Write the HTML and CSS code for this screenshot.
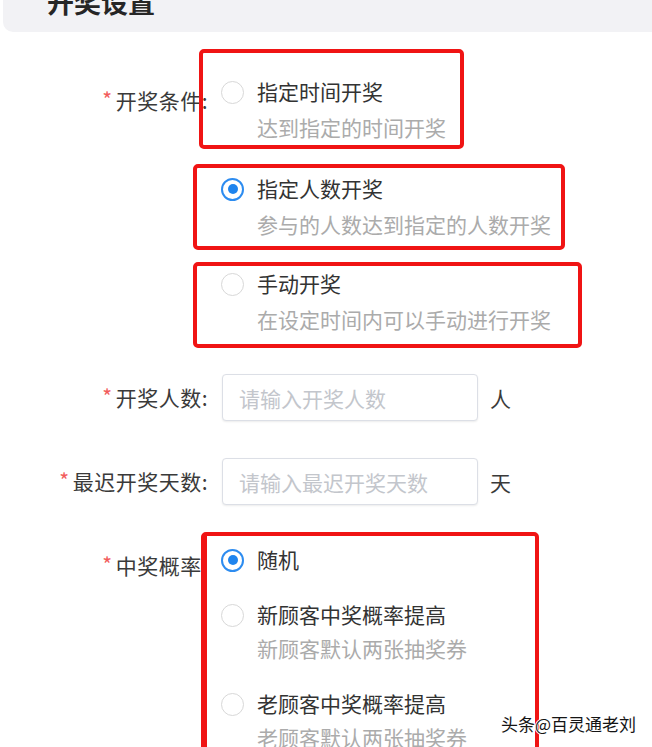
FILE: index.html
```html
<!DOCTYPE html>
<html lang="zh-CN">
<head>
<meta charset="utf-8">
<title>开奖设置</title>
<link rel="stylesheet" href="styles.css">
</head>
<body>
<div class="page">
  <div class="section-head"><h2 class="section-title">开奖设置</h2></div>

  <form class="form">
    <div class="row row-cond">
      <div class="label"><span class="req">*</span>开奖条件:</div>
      <div class="field stack">
        <div class="mark mark-1">
          <label class="opt">
            <span class="radio"></span>
            <span class="opt-title">指定时间开奖</span>
            <span class="opt-desc">达到指定的时间开奖</span>
          </label>
        </div>
        <div class="mark mark-2">
          <label class="opt">
            <span class="radio checked"></span>
            <span class="opt-title">指定人数开奖</span>
            <span class="opt-desc">参与的人数达到指定的人数开奖</span>
          </label>
        </div>
        <div class="mark mark-3">
          <label class="opt">
            <span class="radio"></span>
            <span class="opt-title">手动开奖</span>
            <span class="opt-desc">在设定时间内可以手动进行开奖</span>
          </label>
        </div>
      </div>
    </div>

    <div class="row row-input row-num">
      <div class="label"><span class="req">*</span>开奖人数:</div>
      <div class="field inline">
        <input class="input" type="text" placeholder="请输入开奖人数">
        <span class="unit">人</span>
      </div>
    </div>

    <div class="row row-input row-days">
      <div class="label"><span class="req">*</span>最迟开奖天数:</div>
      <div class="field inline">
        <input class="input" type="text" placeholder="请输入最迟开奖天数">
        <span class="unit">天</span>
      </div>
    </div>

    <div class="row row-prob">
      <div class="label"><span class="req">*</span>中奖概率:</div>
      <div class="field">
        <div class="mark mark-4">
          <label class="opt">
            <span class="radio checked"></span>
            <span class="opt-title">随机</span>
          </label>
          <label class="opt">
            <span class="radio"></span>
            <span class="opt-title">新顾客中奖概率提高</span>
            <span class="opt-desc">新顾客默认两张抽奖券</span>
          </label>
          <label class="opt">
            <span class="radio"></span>
            <span class="opt-title">老顾客中奖概率提高</span>
            <span class="opt-desc">老顾客默认两张抽奖券</span>
          </label>
        </div>
      </div>
    </div>
  </form>

  <div class="watermark">头条@百灵通老刘</div>
</div>
</body>
</html>
```

FILE: styles.css
```css
html, body {
  margin: 0;
  padding: 0;
  overflow: hidden;
  background: #ffffff;
}

body {
  font-family: "Noto Sans CJK SC", "Noto Sans", sans-serif;
  color: #333333;
  width: 652px;
  height: 747px;
}

.page {
  position: relative;
  width: 652px;
  height: 747px;
}

/* ---------- section header ---------- */
.section-head {
  margin-left: 3px;
  height: 32px;
  background: #f2f2f5;
  border-bottom-left-radius: 10px;
  overflow: hidden;
  padding-left: 44px;
}

.section-title {
  margin: -12px 0 0 0;
  font-size: 27px;
  line-height: 27px;
  font-weight: 700;
  color: #262626;
}

/* ---------- form ---------- */
.form {
  padding-top: 17px;
}

.row {
  display: grid;
  grid-template-columns: 208px auto;
  font-size: 21px;
}

.label {
  text-align: right;
  line-height: 28px;
  color: #3a3a3a;
  font-size: 21px;
  letter-spacing: 0.5px;
  white-space: nowrap;
}

.req {
  color: #f25c5c;
  font-size: 21px;
  margin-right: 3px;
  position: relative;
  top: -1px;
}

.row-cond .label {
  padding-top: 37px;
}

.stack {
  display: flex;
  flex-direction: column;
  align-items: flex-start;
}

/* red annotation frames (drawn over the form) */
.mark {
  box-sizing: border-box;
  border: 4px solid #f01414;
  border-radius: 5px;
  position: relative;
  z-index: 1;
}

.mark-1 {
  margin-left: -9px;
  width: 265px;
  padding: 24px 0 4px 19px;
}

.mark-2 {
  margin-left: -15px;
  margin-top: 15px;
  width: 372px;
  padding: 6px 0 8px 25px;
}

.mark-3 {
  margin-left: -15px;
  margin-top: 12px;
  width: 389px;
  padding: 3px 0 11px 25px;
}

.mark-4 {
  margin-left: -7px;
  border-left-width: 6px;
  width: 338px;
  padding: 9px 0 24px 15px;
  display: flex;
  flex-direction: column;
  gap: 27px;
}

/* radio option */
.opt {
  display: grid;
  grid-template-columns: 22px auto;
  column-gap: 13px;
  row-gap: 8px;
  align-items: center;
  font-size: 21px;
  line-height: 28px;
  white-space: nowrap;
}

.mark-4 .opt {
  row-gap: 6px;
}

.radio {
  grid-row: 1;
  grid-column: 1;
  box-sizing: border-box;
  width: 23px;
  height: 23px;
  margin-left: -1px;
  border-radius: 50%;
  border: 1.5px solid #d8d8d8;
  background: #ffffff;
  position: relative;
  top: 1px;
}

.radio.checked {
  border: 2px solid #2d8cf0;
}

.radio.checked::after {
  content: "";
  position: absolute;
  left: 50%;
  top: 50%;
  width: 10px;
  height: 10px;
  margin: -5px 0 0 -5px;
  border-radius: 50%;
  background: #1e84ee;
}

.opt-title {
  grid-row: 1;
  grid-column: 2;
  color: #333333;
}

.opt-desc {
  grid-row: 2;
  grid-column: 2;
  color: #ababab;
}

/* inputs */
.row-num {
  margin-top: 26px;
}

.row-days {
  margin-top: 37px;
}

.row-input .label {
  line-height: 47px;
}

.inline {
  display: flex;
  align-items: center;
  padding-left: 14px;
}

.input {
  box-sizing: border-box;
  width: 256px;
  height: 47px;
  border: 1px solid #dcdfe6;
  border-radius: 4px;
  padding: 0 16px;
  font-family: "Noto Sans CJK SC", sans-serif;
  font-size: 21px;
  color: #333333;
  background: #ffffff;
  box-shadow: 0 1px 2px rgba(0, 0, 0, 0.08);
  outline: none;
}

.input::placeholder {
  color: #c3c6cc;
}

.unit {
  margin-left: 12px;
  color: #3a3a3a;
  font-size: 21px;
}

/* probability row */
.row-prob {
  margin-top: 27px;
}

.row-prob .label {
  padding-top: 19px;
}

/* watermark */
.watermark {
  position: absolute;
  z-index: 2;
  left: 501px;
  top: 712px;
  font-size: 17px;
  line-height: 24px;
  color: #151515;
  font-family: "Noto Sans CJK SC", sans-serif;
  text-shadow: 1px 0 0 #fff, -1px 0 0 #fff, 0 1px 0 #fff, 0 -1px 0 #fff;
}
```
